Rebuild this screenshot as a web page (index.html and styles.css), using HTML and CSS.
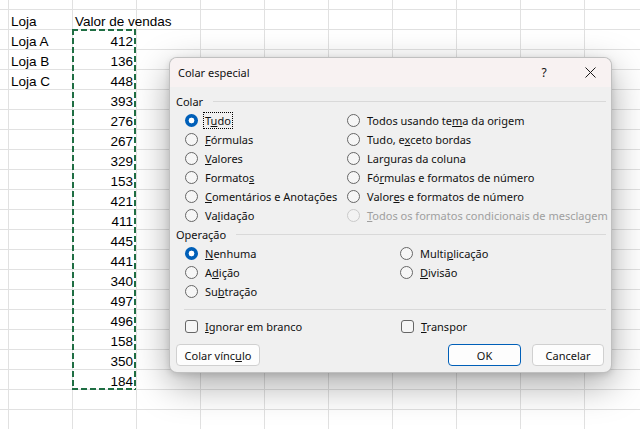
FILE: index.html
```html
<!DOCTYPE html>
<html lang="pt-BR">
<head>
<meta charset="utf-8">
<title>Colar especial</title>
<link rel="stylesheet" href="styles.css">
</head>
<body>
<div class="sheet">
  <div class="rows">
    <div class="row"><div class="cell">Loja</div><div class="cell">Valor de vendas</div></div>
    <div class="row"><div class="cell">Loja A</div><div class="cell num">412</div></div>
    <div class="row"><div class="cell">Loja B</div><div class="cell num">136</div></div>
    <div class="row"><div class="cell">Loja C</div><div class="cell num">448</div></div>
    <div class="row"><div class="cell"></div><div class="cell num">393</div></div>
    <div class="row"><div class="cell"></div><div class="cell num">276</div></div>
    <div class="row"><div class="cell"></div><div class="cell num">267</div></div>
    <div class="row"><div class="cell"></div><div class="cell num">329</div></div>
    <div class="row"><div class="cell"></div><div class="cell num">153</div></div>
    <div class="row"><div class="cell"></div><div class="cell num">421</div></div>
    <div class="row"><div class="cell"></div><div class="cell num">411</div></div>
    <div class="row"><div class="cell"></div><div class="cell num">445</div></div>
    <div class="row"><div class="cell"></div><div class="cell num">441</div></div>
    <div class="row"><div class="cell"></div><div class="cell num">340</div></div>
    <div class="row"><div class="cell"></div><div class="cell num">497</div></div>
    <div class="row"><div class="cell"></div><div class="cell num">496</div></div>
    <div class="row"><div class="cell"></div><div class="cell num">158</div></div>
    <div class="row"><div class="cell"></div><div class="cell num">350</div></div>
    <div class="row"><div class="cell"></div><div class="cell num">184</div></div>
  </div>
  <div class="marquee"></div>

  <div class="dialog" role="dialog" aria-label="Colar especial">
    <div class="titlebar">
      <span class="title">Colar especial</span>
      <span class="help">?</span>
      <span class="close"><svg width="11" height="11" viewBox="0 0 11 11"><path d="M0.5 0.5 L10.5 10.5 M10.5 0.5 L0.5 10.5" stroke="#1b1b1b" stroke-width="1" fill="none"/></svg></span>
    </div>
    <div class="dlg-body">
      <div class="group-head"><span>Colar</span><span class="rule"></span></div>
      <div class="opts paste">
        <label class="opt"><span class="radio on"></span><span class="focus">T<u>u</u>do</span></label>
        <label class="opt"><span class="radio"></span><span><u>F</u>órmulas</span></label>
        <label class="opt"><span class="radio"></span><span><u>V</u>alores</span></label>
        <label class="opt"><span class="radio"></span><span>Formato<u>s</u></span></label>
        <label class="opt"><span class="radio"></span><span><u>C</u>omentários e Anotações</span></label>
        <label class="opt"><span class="radio"></span><span>Va<u>l</u>idação</span></label>
        <label class="opt"><span class="radio"></span><span>Todos usando te<u>m</u>a da origem</span></label>
        <label class="opt"><span class="radio"></span><span>Tudo, e<u>x</u>ceto bordas</span></label>
        <label class="opt"><span class="radio"></span><span>Lar<u>g</u>uras da coluna</span></label>
        <label class="opt"><span class="radio"></span><span>Fó<u>r</u>mulas e formatos de número</span></label>
        <label class="opt"><span class="radio"></span><span>Valor<u>e</u>s e formatos de número</span></label>
        <label class="opt disabled"><span class="radio"></span><span><u>T</u>odos os formatos condicionais de mesclagem</span></label>
      </div>
      <div class="group-head"><span>Operação</span><span class="rule"></span></div>
      <div class="opts ops">
        <label class="opt"><span class="radio on"></span><span><u>N</u>enhuma</span></label>
        <label class="opt"><span class="radio"></span><span>A<u>d</u>ição</span></label>
        <label class="opt"><span class="radio"></span><span>Su<u>b</u>tração</span></label>
        <label class="opt"><span class="radio"></span><span>Multi<u>p</u>licação</span></label>
        <label class="opt"><span class="radio"></span><span><u>D</u>ivisão</span></label>
      </div>
      <div class="sep"></div>
      <div class="checks">
        <label class="check"><span class="box"></span><span><u>I</u>gnorar em branco</span></label>
        <label class="check"><span class="box"></span><span><u>T</u>ranspor</span></label>
      </div>
      <div class="buttons">
        <button class="btn btn-link">Colar vínc<u>u</u>lo</button>
        <button class="btn btn-ok">OK</button>
        <button class="btn btn-cancel">Cancelar</button>
      </div>
    </div>
  </div>
</div>
</body>
</html>
```
FILE: styles.css
```css
* { box-sizing: border-box; }

body {
  margin: 0;
  width: 640px;
  height: 429px;
  overflow: hidden;
  font-family: "Liberation Sans", Arial, sans-serif;
}

.sheet {
  position: relative;
  width: 640px;
  height: 429px;
  overflow: hidden;
  background-color: #fff;
  background-image:
    linear-gradient(to right, #e1e1e1 1px, transparent 1px),
    linear-gradient(to bottom, #e1e1e1 1px, transparent 1px);
  background-size: 64px 100%, 100% 20px;
  background-position: 8px 0, 0 9px;
}

.rows {
  padding: 10px 0 0 9px;
  font-size: 13.5px;
  color: #000;
}

.row {
  display: flex;
  height: 20px;
}

.cell {
  width: 64px;
  flex: none;
  padding: 3px 4px 0 2px;
  line-height: 17px;
  white-space: nowrap;
}

.num { text-align: right; }

.marquee {
  position: absolute;
  left: 72px;
  top: 29px;
  width: 64px;
  height: 361px;
  background-image:
    repeating-linear-gradient(to right, #1f6e43 0 6px, transparent 6px 9px),
    repeating-linear-gradient(to right, #1f6e43 0 6px, transparent 6px 9px),
    repeating-linear-gradient(to bottom, #1f6e43 0 6px, transparent 6px 9px),
    repeating-linear-gradient(to bottom, #1f6e43 0 6px, transparent 6px 9px);
  background-size: 100% 2px, 100% 2px, 2px 100%, 2px 100%;
  background-position: 0 0, 0 100%, 0 0, 100% 0;
  background-repeat: no-repeat;
}

/* Dialog */
.dialog {
  position: absolute;
  left: 169px;
  top: 57px;
  width: 443px;
  height: 316px;
  background: #f0f0f0;
  border: 1px solid rgba(0, 0, 0, 0.2);
  border-radius: 8px;
  box-shadow: 0 12px 36px rgba(0, 0, 0, 0.34), 0 2px 6px rgba(0, 0, 0, 0.12);
  font-family: "Noto Sans", sans-serif;
  font-size: 11px;
  color: #111;
  overflow: hidden;
}

.titlebar {
  height: 29px;
  display: flex;
  align-items: center;
  background: #f8f2f2;
  padding-left: 8px;
  font-size: 11px;
}

.help {
  margin-left: auto;
  width: 10px;
  text-align: center;
  font-size: 12px;
}

.close {
  width: 11px;
  height: 11px;
  margin: 0 15px 0 36px;
  display: flex;
}

.dlg-body {
  padding: 5px 5px 0 6px;
}

.group-head {
  display: flex;
  align-items: center;
  gap: 10px;
  height: 19px;
  line-height: 19px;
}

.rule {
  flex: 1;
  height: 1px;
  background: #d9d9d9;
}

.opts {
  display: grid;
  grid-auto-flow: column;
  margin-left: 9px;
}

.paste {
  grid-template-columns: 162px 1fr;
  grid-template-rows: repeat(6, 19px);
}

.ops {
  grid-template-columns: 215px 1fr;
  grid-template-rows: repeat(3, 19px);
}

.opt, .check {
  display: flex;
  align-items: center;
  gap: 7px;
  white-space: nowrap;
}

.radio {
  flex: none;
  width: 13px;
  height: 13px;
  border-radius: 50%;
  border: 1px solid #666;
  background: #f6f6f6;
}

.radio.on {
  border: none;
  background: radial-gradient(circle, #fff 0 2.6px, #005fb8 3.2px);
}

.disabled { color: #9f9f9f; }
.disabled .radio { border-color: #cacaca; background: #f3f3f3; }

.focus {
  outline: 1px dotted #000;
  padding: 0 1px;
  margin-left: -1px;
}

.sep {
  height: 1px;
  background: #d9d9d9;
  margin: 8px 0 0 8px;
}

.checks {
  display: grid;
  grid-template-columns: 216px 1fr;
  height: 19px;
  margin: 7px 0 0 9px;
}

.box {
  flex: none;
  width: 13px;
  height: 13px;
  border: 1px solid #666;
  border-radius: 3px;
  background: #f6f6f6;
}

.buttons {
  display: flex;
  gap: 11px;
  margin-top: 8px;
  padding-right: 2px;
}

.btn {
  height: 22px;
  padding: 0;
  border: 1px solid #d0d0d0;
  border-radius: 4px;
  background: #fdfdfd;
  font-family: inherit;
  font-size: 11px;
  color: #111;
}

.btn-link { width: 84px; margin-right: auto; }
.btn-ok { width: 73px; border-color: #005fb8; }
.btn-cancel { width: 72px; }
```
